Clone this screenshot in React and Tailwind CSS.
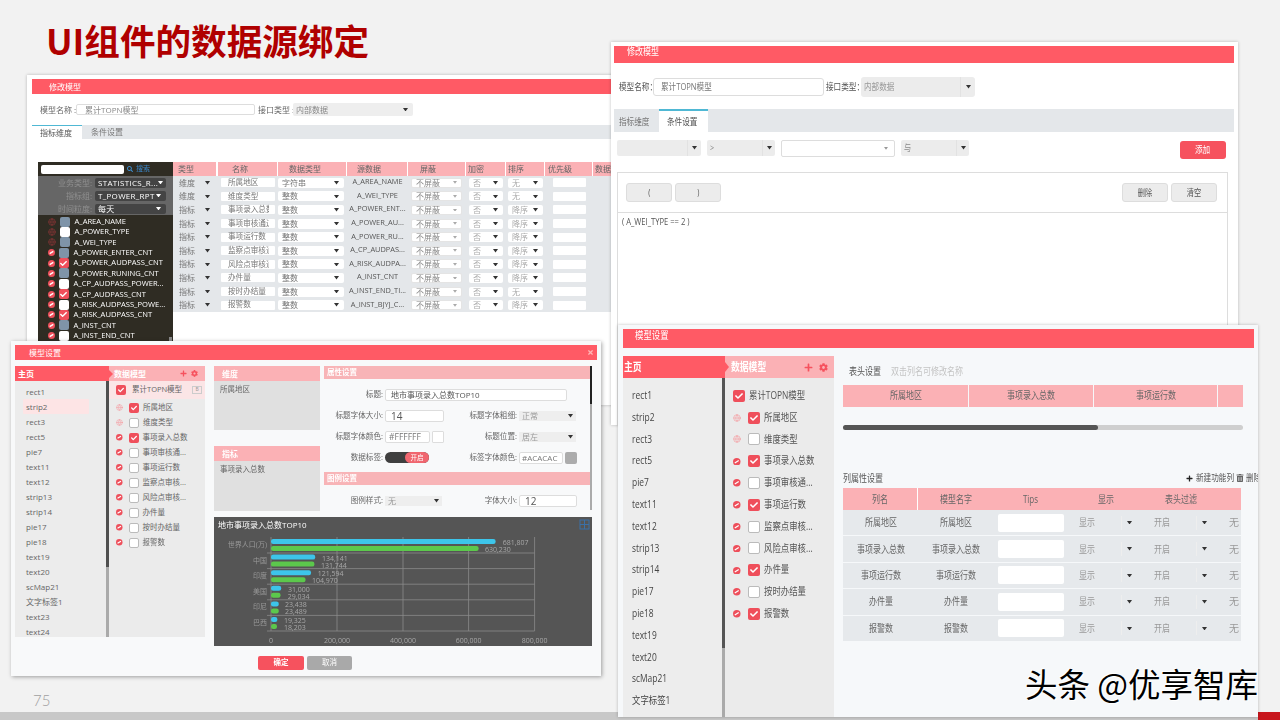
import React from "react";
import { FaPlus, FaCog, FaSearch, FaCheck, FaTrashAlt, FaTimes } from "react-icons/fa";
import { Globe } from "lucide-react";

const Caret = ({ c = "#333", s = 5 }) => (
  <svg width={s} height={s * 0.7} viewBox="0 0 10 7" className="shrink-0"><polygon points="0,0 10,0 5,7" fill={c} /></svg>
);
const Ban = ({ size = 8 }) => (
  <svg width={size} height={size} viewBox="0 0 10 10" className="shrink-0">
    <circle cx="5" cy="5" r="5" fill="#ee4f5b" />
    <line x1="2.4" y1="6.6" x2="7.6" y2="3.4" stroke="#fff" strokeWidth="1.8" />
  </svg>
);
const N = ({ children, o = "origin-left" }) => (
  <span className={`inline-block scale-x-[0.8] whitespace-nowrap ${o}`}>{children}</span>
);
const Chk = ({ on, size = "w-[11px] h-[11px]", slate, icon = 7 }) => (
  <span className={`${size} rounded-[2px] shrink-0 flex items-center justify-center ${on ? "bg-[#ef4f5b]" : slate ? "bg-[#7f94a8]" : "bg-white border border-[#bbb]"}`}>
    {on && <FaCheck size={icon} color="#fff" />}
  </span>
);

/* Window A */
const darkItems = [
  ["A_AREA_NAME", "s", 1], ["A_POWER_TYPE", "w", 1], ["A_WEI_TYPE", "s", 1], ["A_POWER_ENTER_CNT", "s", 0],
  ["A_POWER_AUDPASS_CNT", "r", 0], ["A_POWER_RUNING_CNT", "s", 0], ["A_CP_AUDPASS_POWER...", "w", 0], ["A_CP_AUDPASS_CNT", "r", 0],
  ["A_RISK_AUDPASS_POWE...", "w", 0], ["A_RISK_AUDPASS_CNT", "r", 0], ["A_INST_CNT", "s", 0], ["A_INST_END_CNT", "w", 0],
];
const aRows = [
  ["维度", "所属地区", "字符串", "A_AREA_NAME", "无"],
  ["维度", "维度类型", "整数", "A_WEI_TYPE", "无"],
  ["指标", "事项录入总数", "整数", "A_POWER_ENT...", "降序"],
  ["指标", "事项审核通过", "整数", "A_POWER_AU...", "降序"],
  ["指标", "事项运行数", "整数", "A_POWER_RU...", "降序"],
  ["指标", "监察点审核通", "整数", "A_CP_AUDPAS...", "降序"],
  ["指标", "风险点审核通", "整数", "A_RISK_AUDPA...", "降序"],
  ["指标", "办件量", "整数", "A_INST_CNT", "降序"],
  ["指标", "按时办结量", "整数", "A_INST_END_TI...", "无"],
  ["指标", "报警数", "整数", "A_INST_BJYJ_C...", "降序"],
];
const aCols = "grid grid-cols-[45px_60px_69px_61px_58px_40px_39px_48px_30px]";

const DarkSel = ({ label, value }) => (
  <div className="flex items-center h-[13px]">
    <span className="w-[54px] text-right text-[#8f8f8f] text-[8px]">{label}</span>
    <div className="ml-[3px] w-[71px] h-[10px] bg-[#444] rounded-[2px] flex items-center justify-between pl-[3px] pr-[5px] text-white text-[8px] tracking-[0.3px]">
      <span>{value}</span><Caret c="#fff" />
    </div>
  </div>
);

const WindowA = () => (
  <div className="absolute left-[27px] top-[75px] w-[593px] h-[330px] bg-white shadow-[0_0_3px_rgba(0,0,0,0.25)] pl-[5px] pt-[4px] overflow-hidden blur-[0.3px]">
    <div className="h-[15px] bg-[#ff5a65] text-white text-[8px] pl-[17px] flex items-center">修改模型</div>
    <div className="mt-[9px] h-[13px] flex items-center text-[8px] text-[#666] whitespace-nowrap">
      <span className="ml-[8px] w-[36px] shrink-0">模型名称 :</span>
      <div className="w-[179px] h-[11px] border border-[#ddd] rounded-[2px] pl-[8px] flex items-center text-[#888] shrink-0">累计TOPN模型</div>
      <span className="ml-[3px] w-[35px] shrink-0">接口类型 :</span>
      <div className="w-[120px] h-[13px] bg-[#eee] rounded-[2px] pl-[3px] flex items-center text-[#888] shrink-0">
        <span className="w-[102px]">内部数据</span><span className="pl-[5px]"><Caret /></span>
      </div>
    </div>
    <div className="mt-[9px] h-[14px] bg-[#e4e7ea] flex text-[8px] text-[#777]">
      <div className="w-[50px] bg-white border-t border-[#4fb8d4] pl-[8px] flex items-center text-[#555]">指标维度</div>
      <div className="pl-[9px] flex items-center">条件设置</div>
    </div>
    <div className="mt-[23px] ml-[6px] flex">
      <div className="w-[135px] h-[190px] bg-[#2f2c23] shrink-0 overflow-hidden relative">
        <div className="h-[14px] flex items-center pl-[3px]">
          <div className="w-[83px] h-[9px] bg-white rounded-[2px]" />
          <FaSearch size={6} color="#3f8fd0" className="ml-[3px]" />
          <span className="ml-[3px] text-[#3a86c8] text-[7px]">搜索</span>
        </div>
        <div className="h-[39px] bg-[#666] flex flex-col justify-center">
          <DarkSel label="业务类型:" value="STATISTICS_R..." />
          <DarkSel label="指标组:" value="T_POWER_RPT" />
          <DarkSel label="时间粒度:" value="每天" />
        </div>
        <div className="pt-[1.5px]">
          {darkItems.map(([t, k, g]) => (
            <div key={t} className="h-[10.36px] flex items-center pl-[10px]">
              {g ? <Globe size={8} color="#7a3434" strokeWidth={2.5} /> : <Ban size={7} />}
              <span className="ml-[3.5px]"><Chk on={k === "r"} slate={k === "s"} size="w-[10px] h-[10px] border-0" /></span>
              <span className="ml-[5px] text-white text-[7.6px] font-medium whitespace-nowrap">{t}</span>
            </div>
          ))}
        </div>
        <div className="absolute right-[1px] bottom-0 w-[3px] h-[15px] bg-[#888]" />
      </div>
      <div className="w-[450px] shrink-0">
        <div className={`${aCols} h-[14px] text-[8px] text-[#666]`}>
          {[["类型", "pl-[5px]"], ["名称", "pl-[14px]"], ["数据类型", "pl-[11px]"], ["源数据", "pl-[10px]"], ["屏蔽", "pl-[12px]"], ["加密", "pl-[2px]"], ["排序", "pl-[2px]"], ["优先级", "pl-[3px]"], ["数据", "pl-[2px]"]].map(([t, p], i) => (
            <div key={t} className={`bg-[#fbb1b5] flex items-center border-r ${i === 0 ? "border-r-2" : ""} border-white ${p}`}>{t}</div>
          ))}
        </div>
        <div className="bg-[#e4e7ea]">
          {aRows.map((r, i) => (
            <div key={i} className={`${aCols} h-[13.6px] items-center text-[8px] text-[#777]`}>
              <div className="flex items-center pl-[6px] pr-[8px] justify-between"><span>{r[0]}</span><Caret /></div>
              <div className="ml-[3px] w-[54px] h-[9px] bg-white rounded-[1px] flex items-center pl-[7px]"><span className="block w-[41px] overflow-hidden whitespace-nowrap text-[7.6px]">{r[1]}</span></div>
              <div className="w-[66px] h-[10px] bg-white rounded-[2px] flex items-center justify-between pl-[4px] pr-[5px]"><span>{r[2]}</span><Caret /></div>
              <div className="text-center text-[#555] text-[7.4px] whitespace-nowrap overflow-hidden pb-[2px]">{r[3]}</div>
              <div className="ml-[3px] w-[51px] h-[10px] bg-white border border-[#e4e4e4] rounded-[2px] flex items-center justify-between pl-[4px] pr-[4px] text-[#888]"><span>不屏蔽</span><Caret c="#aaa" s={4} /></div>
              <div className="ml-[3px] w-[34px] h-[10px] bg-white rounded-[2px] flex items-center justify-between pl-[4px] pr-[5px] text-[#aaa]"><span>否</span><Caret /></div>
              <div className="ml-[2px] w-[35px] h-[10px] bg-white rounded-[2px] flex items-center justify-between pl-[4px] pr-[5px] text-[#aaa]"><span>{r[4]}</span><Caret /></div>
              <div className="ml-[8px] w-[33px] h-[9px] bg-white rounded-[1px]" />
              <div />
            </div>
          ))}
        </div>
      </div>
    </div>
  </div>
);

/* Window B */
const GraySel = ({ w, children, div = 14 }) => (
  <div style={{ width: w }} className="h-[16px] bg-[#ececec] rounded-[2px] flex items-center text-[9px] text-[#888] shrink-0">
    <span className="flex-1 pl-[3px]"><N>{children}</N></span>
    <span style={{ width: div }} className="h-full border-l border-[#e2e2e2] flex items-center justify-center"><Caret /></span>
  </div>
);
const GBtn = ({ children, cls = "w-[46px]" }) => (
  <div className={`${cls} h-[19px] bg-[#ececec] border border-[#ddd] rounded-[3px] flex items-center justify-center text-[9px] text-[#555]`}><N o="origin-center">{children}</N></div>
);
const WindowB = () => (
  <div className="absolute left-[611px] top-[42px] w-[627px] h-[383px] bg-white shadow-[0_0_3px_rgba(0,0,0,0.25)] pl-[3px] pr-[4px] pt-[4px] flex flex-col blur-[0.25px]">
    <div className="h-[17px] bg-[#ff5a65] text-white text-[10px] pl-[13px] leading-[11px]"><N>修改模型</N></div>
    <div className="mt-[14px] h-[20px] flex items-center text-[9.5px] text-[#555]">
      <span className="ml-[5px] w-[34px] shrink-0"><N>模型名称：</N></span>
      <div className="w-[171px] h-[18px] border border-[#ddd] rounded-[3px] pl-[7px] flex items-center text-[#777]"><N>累计TOPN模型</N></div>
      <span className="ml-[2px] w-[35px] shrink-0"><N>接口类型：</N></span>
      <div className="w-[114px] h-[20px] bg-[#ececec] rounded-[3px] flex items-center text-[#999]">
        <span className="pl-[3px] flex-1"><N>内部数据</N></span>
        <span className="w-[15px] h-full border-l border-[#e2e2e2] flex items-center justify-center"><Caret /></span>
      </div>
    </div>
    <div className="mt-[12px] h-[23px] bg-[#e4e7ea] flex text-[9.5px] text-[#777]">
      <div className="w-[45px] pl-[5px] flex items-center pt-[3px]"><N>指标维度</N></div>
      <div className="w-[49px] bg-white border-t-2 border-[#4fb8d4] flex items-center pl-[8px] pt-[2px] text-[#555]"><N>条件设置</N></div>
    </div>
    <div className="mt-[8px] ml-[3px] h-[19px] flex items-start gap-[6px]">
      <GraySel w={84} div={14}>{" "}</GraySel>
      <GraySel w={68} div={13}>&gt;</GraySel>
      <div className="w-[114px] h-[17px] border border-[#ddd] rounded-[2px] flex items-center justify-end pr-[6px]"><Caret c="#999" s={4} /></div>
      <GraySel w={68} div={13}>与</GraySel>
      <div className="ml-auto mr-[8px] mt-[1px] w-[46px] h-[18px] bg-[#f6525e] rounded-[3px] text-white text-[9.5px] flex items-center justify-center"><N o="origin-center">添加</N></div>
    </div>
    <div className="mt-[13px] ml-[3px] mr-[6px] flex-1 border border-[#ddd] border-b-0 flex flex-col">
      <div className="h-[40px] border-b border-[#ddd] flex items-center pl-[8px] pr-[10px] gap-[3px]">
        <GBtn>(</GBtn><GBtn>)</GBtn>
        <div className="flex-1" />
        <GBtn>删除</GBtn><GBtn>清空</GBtn>
      </div>
      <div className="pl-[4px] pt-[2px] text-[9.5px] text-[#555]"><N>( A_WEI_TYPE == 2 )</N></div>
    </div>
  </div>
);

/* Window C */
const cList = ["rect1", "strip2", "rect3", "rect5", "pie7", "text11", "text12", "strip13", "strip14", "pie17", "pie18", "text19", "text20", "scMap21", "文字标签1", "text23", "text24"];
const cModel = [["所属地区", 1, 1], ["维度类型", 0, 1], ["事项录入总数", 1, 0], ["事项审核通...", 0, 0], ["事项运行数", 0, 0], ["监察点审核...", 0, 0], ["风险点审核...", 0, 0], ["办件量", 0, 0], ["按时办结量", 0, 0], ["报警数", 0, 0]];
const Lbl = ({ w, children }) => <span style={{ width: w }} className="text-right text-[#666] text-[7.6px] shrink-0">{children}</span>;
const CSel = ({ w, children }) => (
  <div style={{ width: w }} className="h-[10px] bg-[#eee] flex items-center text-[8px] text-[#999] ml-[2px]">
    <span className="flex-1 pl-[3px]">{children}</span>
    <span className="w-[12px] flex items-center justify-center"><Caret /></span>
  </div>
);
const CInput = ({ w, children, cls = "text-[#555] text-[8px] pl-[5px]" }) => (
  <div style={{ width: w }} className={`h-[12px] bg-white border border-[#ddd] rounded-[2px] flex items-center ml-[2px] whitespace-nowrap ${cls}`}>{children}</div>
);
const Row = ({ mt, left, lblL, lblR, right }) => (
  <div style={{ marginTop: mt }} className="h-[12px] flex items-center">
    <div className="w-[120px] flex items-center shrink-0"><Lbl w={59}>{lblL}</Lbl>{left}</div>
    <Lbl w={73}>{lblR}</Lbl>{right}
  </div>
);
const bars = [
  ["世界人口(万)", 681807, "681,807", 630230, "630,230", 502.7, 485],
  ["中国", 134141, "134,141", 131744, "131,744", 322, 321],
  ["印度", 121594, "121,594", 104970, "104,970", 317.7, 312],
  ["美国", 31000, "31,000", 29034, "29,034", 288, 287.7],
  ["印尼", 23438, "23,438", 23489, "23,489", 285, 285],
  ["巴西", 19325, "19,325", 18203, "18,203", 284, 284],
];
const Chart = () => (
  <div className="mt-[6px] h-[129px] bg-[#555] relative">
    <svg width="378" height="129" viewBox="0 0 378 129" className="block" fontFamily="'Open Sans','Noto Sans CJK SC',sans-serif">
      <text x="4" y="11" fontSize="8" fill="#fff">地市事项录入总数TOP10</text>
      <rect x="366" y="3" width="9" height="9" fill="none" stroke="#3a70a8" strokeWidth="1" />
      <line x1="370.5" y1="3" x2="370.5" y2="12" stroke="#3a70a8" />
      <line x1="366" y1="7.5" x2="375" y2="7.5" stroke="#3a70a8" />
      {[57, 123, 189, 254.6, 320.6].map((x) => (
        <line key={x} x1={x} y1="20" x2={x} y2="114" stroke="#8a8a8a" strokeWidth="0.8" />
      ))}
      {[36, 51.6, 67.2, 82.8, 98.4, 114].map((y) => (
        <line key={y} x1="53" y1={y} x2="320.6" y2={y} stroke="#8a8a8a" strokeWidth="0.8" />
      ))}
      {bars.map(([name, a, al, b, bl, ax, bx], i) => {
        const y = 22 + i * 15.6;
        const k = 263.6 / 800000;
        return (
          <g key={name}>
            <rect x="57" y={y} width={a * k} height="5" rx="2.2" fill="#3dc5ea" />
            <rect x="57" y={y + 7} width={b * k} height="5" rx="2.2" fill="#5cc84c" />
            <text x="53" y={y + 8} fontSize="7" fill="#999" textAnchor="end">{name}</text>
            <text x={ax - 214} y={y + 6} fontSize="7" fill="#a8a8a8">{al}</text>
            <text x={bx - 214} y={y + 13} fontSize="7" fill="#a8a8a8">{bl}</text>
          </g>
        );
      })}
      {[["0", 57], ["200,000", 123], ["400,000", 189], ["600,000", 254.6], ["800,000", 320.6]].map(([t, x]) => (
        <text key={t} x={x} y="126" fontSize="7" fill="#a8a8a8" textAnchor="middle">{t}</text>
      ))}
    </svg>
  </div>
);
const WindowC = () => (
  <div className="absolute left-[11px] top-[341px] w-[590px] h-[335px] bg-[#f8f9fa] shadow-[1px_1px_4px_rgba(0,0,0,0.35)] pl-[4px] pr-[4px] pt-[4px] blur-[0.3px] text-[#666]">
    <div className="h-[15px] bg-[#ff5a65] text-white text-[8px] pl-[14px] pr-[3px] flex items-center justify-between">
      <span>模型设置</span><FaTimes size={7} color="#ffb5b5" />
    </div>
    <div className="mt-[6px] flex h-[280px]">
      <div className="w-[94px] h-[271px] shrink-0 flex flex-col bg-[#ececec] relative">
        <div className="h-[15px] bg-[#ff5a65] text-white text-[8px] font-bold pl-[3px] flex items-center shrink-0">主页</div>
        <div className="absolute left-[94px] top-[3.5px] w-0 h-0 border-y-[4px] border-y-transparent border-l-[4px] border-l-[#ff5a65] z-10" />
        <div className="flex flex-1 min-h-0">
          <div className="flex-1 pl-[11px] pt-[3px] overflow-hidden relative">
            {cList.map((t) => (
              <div key={t} className={`h-[15px] flex items-center text-[8px] text-[#666] ${t === "strip2" ? "pl-[3px] -ml-[3px] mr-[17px] bg-[#fde4e5] rounded-[1px]" : ""}`}>{t}</div>
            ))}
          </div>
          <div className="w-[3px] flex flex-col bg-[#aaa]"><div className="h-[186px] bg-[#4f4f4f]" /></div>
        </div>
      </div>
      <div className="w-[96px] h-[271px] shrink-0 bg-[#ebebeb] flex flex-col">
        <div className="h-[15px] bg-[#fbb1b5] text-white text-[8px] font-bold pl-[5px] pr-[7px] flex items-center justify-between">
          <span>数据模型</span>
          <span className="flex gap-[4px]"><FaPlus size={7} color="#f6525e" /><FaCog size={7} color="#f6525e" /></span>
        </div>
        <div className="h-[18px] bg-[#fbe5e6] flex items-center pl-[7px] text-[7.5px]">
          <Chk on size="w-[10px] h-[10px]" icon={6} />
          <span className="ml-[6px]">累计TOPN模型</span>
          <span className="ml-auto mr-[3px] w-[10px] h-[8px] border border-[#ccc] text-[5px] text-[#999] flex items-center justify-center">B</span>
        </div>
        <div className="pt-[1px]">
          {cModel.map(([t, on, g]) => (
            <div key={t} className="h-[15px] flex items-center pl-[7px] text-[7.5px]">
              {g ? <Globe size={7} color="#f5a0a5" /> : <Ban size={6.5} />}
              <span className="ml-[6px]"><Chk on={!!on} size="w-[10px] h-[10px]" icon={6} /></span>
              <span className="ml-[4px] whitespace-nowrap">{t}</span>
            </div>
          ))}
        </div>
      </div>
      <div className="ml-[9px] w-[378px] flex flex-col">
        <div className="h-[145px] flex shrink-0">
          <div className="w-[106px] shrink-0 text-[8px]">
            <div className="h-[15px] bg-[#fbb1b5] text-white font-bold pl-[8px] flex items-center">维度</div>
            <div className="h-[49px] bg-[#e0e0e0] pl-[6px] pt-[3px] text-[7.5px]">所属地区</div>
            <div className="mt-[16px] h-[15px] bg-[#fbb1b5] text-white font-bold pl-[8px] flex items-center">指标</div>
            <div className="h-[50px] bg-[#e0e0e0] pl-[6px] pt-[3px] text-[7.5px]">事项录入总数</div>
          </div>
          <div className="ml-[4px] w-[268px] flex">
            <div className="w-[266px] shrink-0">
              <div className="h-[13px] bg-[#f8b4b7] text-white text-[7.5px] font-bold pl-[3px] flex items-center">属性设置</div>
              <div style={{ marginTop: 10 }} className="h-[12px] flex items-center">
                <Lbl w={59}>标题:</Lbl><CInput w={182}>地市事项录入总数TOP10</CInput>
              </div>
              <Row mt={9} lblL="标题字体大小:" lblR="标题字体粗细:" left={<CInput w={59} cls="text-[#555] text-[10px] pl-[5px]">14</CInput>} right={<CSel w={57}>正常</CSel>} />
              <Row mt={9} lblL="标题字体颜色:" lblR="标题位置:"
                left={<><CInput w={45} cls="text-[#777] text-[8.5px] pl-[3px]">#FFFFFF</CInput><span className="ml-[2px] w-[12px] h-[12px] bg-white border border-[#ddd] rounded-[1px]" /></>}
                right={<CSel w={57}>居左</CSel>} />
              <Row mt={9} lblL="数据标签:" lblR="标签字体颜色:"
                left={<div className="ml-[2px] w-[44px] h-[11px] rounded-full bg-[#3f3f3f] flex justify-end"><span className="w-[24px] h-full rounded-full bg-[#f0666f] text-white text-[6.5px] flex items-center justify-center">开启</span></div>}
                right={<><CInput w={44} cls="text-[#777] text-[8px] pl-[2px]">#ACACAC</CInput><span className="ml-[2px] w-[12px] h-[12px] bg-[#acacac] rounded-[2px]" /></>} />
              <div className="mt-[8px] h-[13px] bg-[#f8b4b7] text-white text-[7.5px] font-bold pl-[3px] flex items-center">图例设置</div>
              <Row mt={10} lblL="图例样式:" lblR="字体大小:" left={<CSel w={57}>无</CSel>} right={<CInput w={58} cls="text-[#555] text-[10px] pl-[5px]">12</CInput>} />
            </div>
            <div className="w-[2px] h-[144px] bg-[#aaa]"><div className="h-[38px] bg-[#222]" /></div>
          </div>
        </div>
        <Chart />
      </div>
    </div>
    <div className="mt-[10px] ml-[243px] flex gap-[3px] text-[7.5px] text-white">
      <div className="w-[46px] h-[14px] bg-[#f6525e] rounded-[2px] flex items-center justify-center font-bold">确定</div>
      <div className="w-[45px] h-[14px] bg-[#a9a9a9] rounded-[2px] flex items-center justify-center">取消</div>
    </div>
  </div>
);

/* Window D */
const dList = ["rect1", "strip2", "rect3", "rect5", "pie7", "text11", "text12", "strip13", "strip14", "pie17", "pie18", "text19", "text20", "scMap21", "文字标签1"];
const dModel = [["所属地区", 1, 1], ["维度类型", 0, 1], ["事项录入总数", 1, 0], ["事项审核通...", 0, 0], ["事项运行数", 1, 0], ["监察点审核...", 0, 0], ["风险点审核...", 0, 0], ["办件量", 1, 0], ["按时办结量", 0, 0], ["报警数", 1, 0]];
const dRows = ["所属地区", "事项录入总数", "事项运行数", "办件量", "报警数"];
const dCols = "grid grid-cols-[75px_75px_75px_75px_75px_24px]";
const DSel = ({ t }) => (
  <div className="flex items-center pl-[11px] text-[#999]">
    <span className="w-[42px]"><N>{t}</N></span>
    <span className="w-[16px] h-[14px] border-l border-[#eee] flex items-center justify-center"><Caret /></span>
  </div>
);
const WindowD = () => (
  <div className="absolute left-[618px] top-[325px] w-[640px] h-[392px] bg-[#f6f8fa] shadow-[0_0_3px_rgba(0,0,0,0.25)] pl-[5px] pr-[4px] pt-[4px] overflow-hidden text-[#555] blur-[0.25px]">
    <div className="h-[19px] bg-[#ff5a65] text-white text-[10.5px] pl-[12px] leading-[12px]"><N>模型设置</N></div>
    <div className="mt-[8px] flex">
      <div className="w-[102px] h-[361px] shrink-0 flex flex-col bg-[#ededed] relative">
        <div className="h-[22px] bg-[#ff5a65] text-white text-[11px] font-bold pl-px flex items-center shrink-0"><N>主页</N></div>
        <div className="absolute left-[102px] top-[6px] w-0 h-0 border-y-[5px] border-y-transparent border-l-[4px] border-l-[#ff5a65] z-10" />
        <div className="flex flex-1 min-h-0">
          <div className="flex-1 pl-[9px] pt-[7px] overflow-hidden">
            {dList.map((t) => (
              <div key={t} className="h-[21.8px] flex items-center text-[10.5px] text-[#444]"><N>{t}</N></div>
            ))}
          </div>
          <div className="w-[3px] bg-[#aaa]"><div className="h-[270px] bg-[#555]" /></div>
        </div>
      </div>
      <div className="w-[109px] h-[361px] shrink-0 bg-[#ebebeb] flex flex-col">
        <div className="h-[22px] bg-[#fbb1b5] text-white text-[11px] font-bold pl-[6px] pr-[6px] flex items-center justify-between">
          <N>数据模型</N>
          <span className="flex gap-[6px]"><FaPlus size={9} color="#f6525e" /><FaCog size={9} color="#f6525e" /></span>
        </div>
        <div className="pt-[7px]">
          <div className="h-[21.8px] flex items-center pl-[8px] text-[10.5px]">
            <Chk on size="w-[12px] h-[12px]" icon={8} />
            <span className="ml-[4px]"><N>累计TOPN模型</N></span>
          </div>
          {dModel.map(([t, on, g]) => (
            <div key={t} className="h-[21.8px] flex items-center pl-[8px] text-[10.5px]">
              <span className="w-[8px] flex justify-center">{g ? <Globe size={8} color="#f5a0a5" /> : <Ban size={7.5} />}</span>
              <span className="ml-[7px]"><Chk on={!!on} size="w-[11.5px] h-[12px]" icon={8} /></span>
              <span className="ml-[4px]"><N>{t}</N></span>
            </div>
          ))}
        </div>
      </div>
      <div className="ml-[9px] w-[411px] shrink-0">
        <div className="mt-[9px] h-[12px] flex items-center text-[10px] pl-[6px]">
          <span className="w-[42px]"><N>表头设置</N></span>
          <span className="text-[#c4c4c4]"><N>双击列名可修改名称</N></span>
        </div>
        <div className="mt-[7.5px] w-[400px] h-[22.5px] flex gap-[1px] text-[10px] text-[#666]">
          {[["所属地区", "w-[125px]"], ["事项录入总数", "w-[124px]"], ["事项运行数", "w-[123px]"], ["", "flex-1"]].map(([t, w]) => (
            <div key={w} className={`${w} bg-[#fbb1b5] flex items-center justify-center`}><N o="origin-center">{t}</N></div>
          ))}
        </div>
        <div className="mt-[18px] w-[400px] h-[5px] bg-[#cfcfcf] rounded-full"><div className="w-[255px] h-full bg-[#555] rounded-full" /></div>
        <div className="mt-[42px] h-[12px] flex items-center text-[10px]">
          <N>列属性设置</N>
          <span className="ml-auto flex items-center">
            <FaPlus size={7} color="#222" className="mr-[3px]" />
            <span className="w-[40px] text-[9.5px]"><N>新建功能列</N></span>
            <FaTrashAlt size={8} color="#666" className="mr-[2px]" />
            <span className="w-[8px] text-[9.5px]"><N>删除</N></span>
          </span>
        </div>
        <div className="mt-[4px] w-[398px] text-[10px]">
          <div className={`${dCols} h-[22px] bg-[#fbb1b5] text-[#666]`}>
            {["列名", "模型名字", "Tips", "显示", "表头过滤", ""].map((t, i) => (
              <div key={i} className={`flex items-center justify-center ${i === 0 ? "border-r border-white" : ""}`}><N o="origin-center">{t}</N></div>
            ))}
          </div>
          {dRows.map((t) => (
            <div key={t} className={`${dCols} h-[25.4px] mb-px bg-[#e6e9ec] items-center text-[#666]`}>
              <div className="text-center"><N o="origin-center">{t}</N></div>
              <div className="text-center"><N o="origin-center">{t}</N></div>
              <div className="pl-[5px]"><div className="w-[66px] h-[18px] bg-white rounded-[2px]" /></div>
              <DSel t="显示" />
              <DSel t="开启" />
              <div className="pl-[11px] text-[#999]">无</div>
            </div>
          ))}
        </div>
      </div>
    </div>
  </div>
);

export default function App() {
  return (
    <div className="relative w-[1280px] h-[720px] overflow-hidden bg-[#f2f2f2] flex flex-col font-['Open_Sans','Noto_Sans_CJK_SC',sans-serif]">
      <h1 className="pl-[46px] pt-[15px] text-[35.6px] leading-[50px] font-bold text-[#b00000] font-['Noto_Sans_CJK_SC',sans-serif]">UI组件的数据源绑定</h1>
      <div className="mt-auto pl-[33px] pb-[2px] text-[15px] leading-[20px] font-light text-[#a0a0a0] font-['Lato',sans-serif]">75</div>
      <div className="h-[8px] bg-[#c8c8c8] flex justify-end shrink-0"><div className="w-[22px] h-full bg-[#c8161d]" /></div>
      <WindowA />
      <WindowB />
      <WindowC />
      <WindowD />
      <div className="absolute left-[1025px] top-[663px] text-[32.5px] leading-[40px] text-black font-['Noto_Sans_CJK_SC',sans-serif] [text-shadow:1px_1px_0_#fff,-1px_-1px_0_#fff] whitespace-nowrap">头条 @优享智库</div>
    </div>
  );
}
